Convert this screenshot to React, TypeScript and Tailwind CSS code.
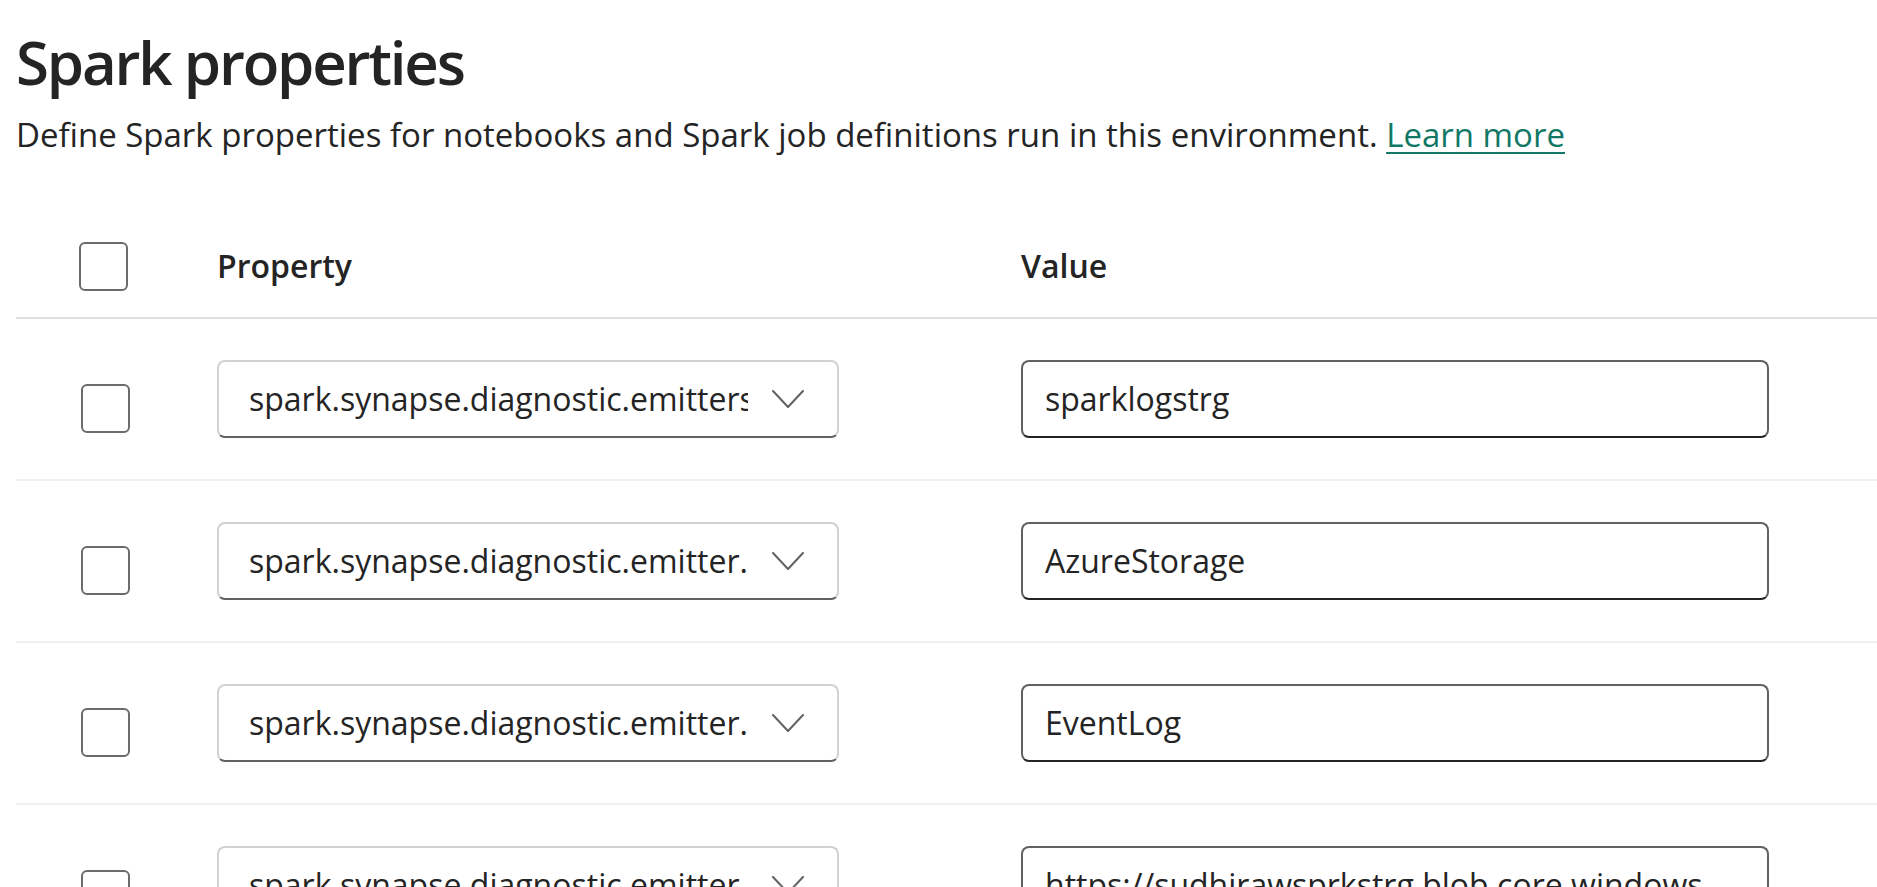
import React from "react";

const rows = [
  { prop: "spark.synapse.diagnostic.emitters", value: "sparklogstrg" },
  { prop: "spark.synapse.diagnostic.emitter.sparklogstrg.type", value: "AzureStorage" },
  { prop: "spark.synapse.diagnostic.emitter.sparklogstrg.categories", value: "EventLog" },
  { prop: "spark.synapse.diagnostic.emitter.sparklogstrg.uri", value: "https://sudhirawsprkstrg.blob.core.windows.net" },
];

function Chevron() {
  return (
    <svg width="32" height="18" viewBox="0 0 32 18" fill="none" className="shrink-0">
      <polyline points="1,1 16,17 31,1" stroke="#616161" strokeWidth="2" strokeLinecap="round" strokeLinejoin="round" />
    </svg>
  );
}

export default function App() {
  return (
    <div className="h-[887px] overflow-hidden bg-white text-[#242424] font-['Open_Sans',sans-serif]">
      <div className="pl-4 pt-[26px]">
        <h1 className="text-[60px] leading-[72px] font-semibold tracking-[-2.2px]">Spark properties</h1>
        <p className="mt-[17px] text-[33px] leading-[40px]">
          Define Spark properties for notebooks and Spark job definitions run in this environment.{" "}
          <a className="text-[#117865] underline decoration-2 underline-offset-[5px]">Learn more</a>
        </p>
      </div>

      <div className="ml-4 mt-[60px]">
        <div className="grid grid-cols-[201px_804px_1fr] items-center h-[104px] border-b-2 border-[#e0e0e0]">
          <div className="pl-[63px]">
            <div className="w-[49px] h-[49px] rounded-[6px] border-2 border-[#6b6b6b]" />
          </div>
          <div className="text-[32px] leading-[40px] font-semibold">Property</div>
          <div className="text-[32px] leading-[40px] font-semibold">Value</div>
        </div>

        {rows.map((r, i) => (
          <div key={i} className="grid grid-cols-[201px_804px_1fr] items-center h-[162px] border-b-2 border-[#f0f0f0]">
            <div className="pl-[65px]">
              <div className="mt-[18px] w-[49px] h-[49px] rounded-[6px] border-2 border-[#6b6b6b]" />
            </div>
            <div>
              <div className="w-[622px] h-[78px] rounded-[8px] border-2 border-[#d1d1d1] border-b-[#616161] flex items-center pl-[30px] pr-[33px]">
                <div className="w-[499px] overflow-hidden whitespace-nowrap text-[32px] leading-[40px]">{r.prop}</div>
                <div className="flex-1" />
                <Chevron />
              </div>
            </div>
            <div>
              <div className="w-[748px] h-[78px] rounded-[8px] border-2 border-[#616161] border-b-[#242424] flex items-center pl-[22px]">
                <div className="w-[659px] overflow-hidden whitespace-nowrap text-[32px] leading-[40px]">{r.value}</div>
              </div>
            </div>
          </div>
        ))}
      </div>
    </div>
  );
}
